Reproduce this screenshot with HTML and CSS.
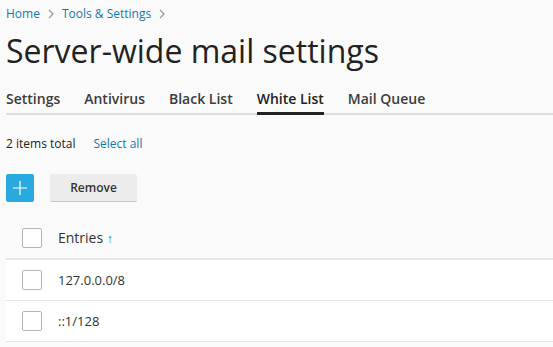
FILE: index.html
```html
<!DOCTYPE html>
<html lang="en">
<head>
    <meta charset="UTF-8">
    <title>Server-wide mail settings</title>
    <link rel="stylesheet" href="styles.css">
</head>
<body>
    <div class="page">
        <nav class="breadcrumbs">
            <a href="#">Home</a>
            <svg class="sep" width="6" height="10" viewBox="0 0 6 10"><path d="M1 1 L5 5 L1 9" fill="none" stroke="#999" stroke-width="1.2"/></svg>
            <a href="#">Tools &amp; Settings</a>
            <svg class="sep" width="6" height="10" viewBox="0 0 6 10"><path d="M1 1 L5 5 L1 9" fill="none" stroke="#999" stroke-width="1.2"/></svg>
        </nav>
        <h1>Server-wide mail settings</h1>

        <div class="tabs">
            <a href="#" class="tab">Settings</a>
            <a href="#" class="tab">Antivirus</a>
            <a href="#" class="tab">Black List</a>
            <a href="#" class="tab active">White List</a>
            <a href="#" class="tab">Mail Queue</a>
        </div>

        <div class="summary">
            <span>2 items total</span>
            <a href="#">Select all</a>
        </div>

        <div class="toolbar">
            <button class="btn-add" title="Add">
                <svg width="16" height="16" viewBox="0 0 16 16">
                    <path d="M8 1 V15 M1 8 H15" stroke="white" stroke-width="1.2"/>
                </svg>
            </button>
            <button class="btn">Remove</button>
        </div>

        <div class="list">
            <div class="row head">
                <span class="check"></span>
                <span>Entries <span class="sort">&#8593;</span></span>
            </div>
            <div class="row">
                <span class="check"></span>
                <span>127.0.0.0/8</span>
            </div>
            <div class="row">
                <span class="check"></span>
                <span>::1/128</span>
            </div>
        </div>
    </div>
</body>
</html>
```

FILE: styles.css
```css
body {
    margin: 0;
    font-family: "Open Sans", sans-serif;
    background: #fafafa;
    color: #222;
}
a {
    text-decoration: none;
    color: #1478ad;
}
.page {
    padding: 4px 0 0 6px;
}
.breadcrumbs {
    display: flex;
    align-items: center;
    font-size: 12px;
    line-height: 20px;
}
.breadcrumbs .sep {
    margin: 0 8px 0 8px;
}
h1 {
    margin: 5px 0 0 0;
    font-size: 32px;
    font-weight: 400;
    line-height: 44px;
    color: #222;
}
.tabs {
    display: flex;
    gap: 24px;
    margin-top: 16px;
    border-bottom: 2px solid #dedede;
}
.tab {
    color: #3c3c3c;
    font-size: 14px;
    font-weight: 600;
    line-height: 20px;
    padding-bottom: 3px;
    margin-bottom: -2px;
    border-bottom: 3px solid transparent;
}
.tab.active {
    color: #222;
    border-bottom-color: #222;
}
.summary {
    display: flex;
    gap: 18px;
    font-size: 12px;
    line-height: 18px;
    margin-top: 20px;
}
.toolbar {
    display: flex;
    gap: 16px;
    margin-top: 21px;
}
.btn-add {
    width: 28px;
    height: 28px;
    border: none;
    border-radius: 2px;
    background: #28aae1;
    display: flex;
    align-items: center;
    justify-content: center;
    padding: 0;
}
.btn {
    height: 28px;
    width: 87px;
    border: none;
    border-bottom: 1px solid #c8c8c8;
    border-radius: 2px;
    background: #ececec;
    font-family: "Open Sans", sans-serif;
    font-size: 12px;
    font-weight: 600;
    color: #333;
}
.list {
    margin-top: 15px;
}
.row {
    display: flex;
    align-items: center;
    gap: 16px;
    height: 40px;
    padding-left: 16px;
    background: #fff;
    border-bottom: 1px solid #e4e4e4;
    font-size: 13px;
    color: #333;
}
.row.head {
    background: none;
    height: 41px;
    border-bottom: 2px solid #e6e6e6;
    font-size: 14px;
}
.check {
    width: 18px;
    height: 18px;
    border: 1px solid #b4b4b4;
    border-radius: 2px;
    background: #fff;
}
.sort {
    color: #1478ad;
    font-size: 12px;
}
```
